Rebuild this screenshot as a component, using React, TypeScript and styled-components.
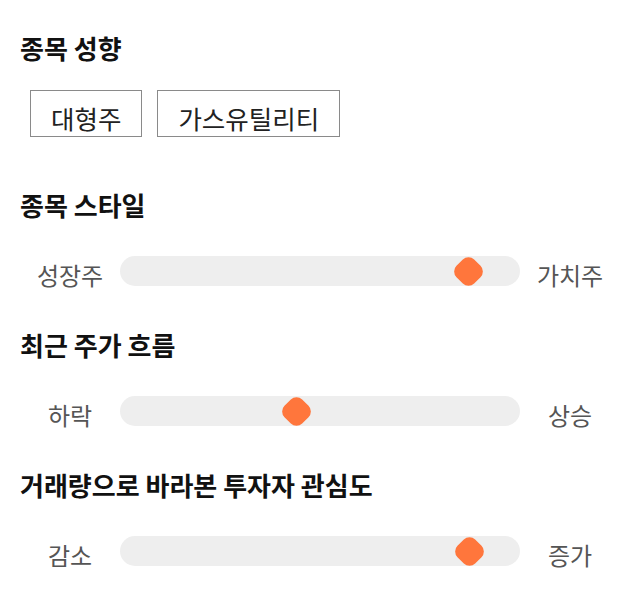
import React from "react";
import styled, { createGlobalStyle } from "styled-components";

const GlobalStyle = createGlobalStyle`
  html, body {
    margin: 0;
    padding: 0;
    background: #ffffff;
  }
  body {
    font-family: "Noto Sans CJK KR", "Noto Sans", sans-serif;
    color: #111;
  }
`;

const Page = styled.div`
  width: 640px;
  box-sizing: border-box;
  padding: 30px 20px;
  display: flex;
  flex-direction: column;
`;

const Section = styled.section<{ $gap: number; $after: number }>`
  display: flex;
  flex-direction: column;
  gap: ${(p) => p.$gap}px;
  margin-bottom: ${(p) => p.$after}px;
`;

const Heading = styled.h2`
  margin: 0;
  font-size: 26px;
  line-height: 36px;
  font-weight: 700;
  color: #111;
`;

const ChipRow = styled.div`
  display: flex;
  gap: 15px;
  padding-left: 10px;
`;

const Chip = styled.div`
  height: 47px;
  box-sizing: border-box;
  padding: 7px 20px 0;
  display: flex;
  align-items: center;
  border: 1px solid #8a8a8a;
  background: #fff;
  font-size: 25.5px;
  color: #222;
  white-space: nowrap;
`;

const SliderRow = styled.div`
  display: grid;
  grid-template-columns: 100px 400px 100px;
  grid-template-rows: 30px;
  align-items: center;
`;

const EndLabel = styled.span`
  text-align: center;
  font-size: 24px;
  line-height: 30px;
  padding-top: 8px;
  color: #555;
  white-space: nowrap;
`;

const Track = styled.div`
  position: relative;
  height: 30px;
  border-radius: 15px;
  background: #eeeeee;
`;

const Thumb = styled.div`
  position: absolute;
  top: 50%;
  width: 25px;
  height: 25px;
  margin: -12.5px 0 0 -12.5px;
  border-radius: 8px;
  background: #ff763c;
  transform: rotate(45deg);
`;

const TRACK_W = 400;
const THUMB_W = 30;

function Slider({ left, right, value }: { left: string; right: string; value: number }) {
  const x = THUMB_W / 2 + value * (TRACK_W - THUMB_W);
  return (
    <SliderRow>
      <EndLabel>{left}</EndLabel>
      <Track>
        <Thumb style={{ left: `${x}px` }} />
      </Track>
      <EndLabel>{right}</EndLabel>
    </SliderRow>
  );
}

export default function App() {
  return (
    <>
      <GlobalStyle />
      <Page>
        <Section $gap={24} $after={50}>
          <Heading>종목 성향</Heading>
          <ChipRow>
            <Chip>대형주</Chip>
            <Chip>가스유틸리티</Chip>
          </ChipRow>
        </Section>
        <Section $gap={33} $after={41}>
          <Heading>종목 스타일</Heading>
          <Slider left="성장주" right="가치주" value={0.9} />
        </Section>
        <Section $gap={33} $after={41}>
          <Heading>최근 주가 흐름</Heading>
          <Slider left="하락" right="상승" value={0.436} />
        </Section>
        <Section $gap={33} $after={0}>
          <Heading>거래량으로 바라본 투자자 관심도</Heading>
          <Slider left="감소" right="증가" value={0.905} />
        </Section>
      </Page>
    </>
  );
}
